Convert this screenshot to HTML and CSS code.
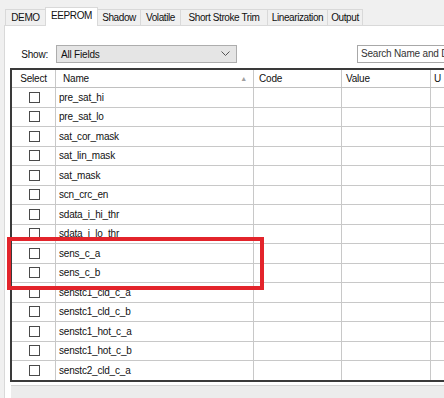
FILE: index.html
```html
<!DOCTYPE html>
<html lang="en">
<head>
    <meta charset="UTF-8">
    <title>EEPROM</title>
    <link rel="stylesheet" href="styles.css">
</head>
<body>
    <div class="tabs">
        <div class="tab tab-demo">DEMO</div>
        <div class="tab tab-eeprom active">EEPROM</div>
        <div class="tab tab-shadow">Shadow</div>
        <div class="tab tab-volatile">Volatile</div>
        <div class="tab tab-sst">Short Stroke Trim</div>
        <div class="tab tab-lin">Linearization</div>
        <div class="tab tab-out">Output</div>
    </div>

    <div class="panel">
        <div class="toolbar">
            <span class="show-label">Show:</span>
            <div class="combo">
                <span>All Fields</span>
                <svg class="chevron" width="9" height="6" viewBox="0 0 9 6"><path d="M0.5 0.5 L4.5 4.5 L8.5 0.5" fill="none" stroke="#555" stroke-width="1"/></svg>
            </div>
            <div class="search">Search Name and D</div>
        </div>

        <div class="grid">
            <div class="row head">
                <div class="cell c-select">Select</div>
                <div class="cell c-name">Name <span class="sort">&#9650;</span></div>
                <div class="cell c-code">Code</div>
                <div class="cell c-value">Value</div>
                <div class="cell c-unit">U</div>
            </div>
            <div class="row"><div class="cell c-select"><span class="check"></span></div><div class="cell c-name">pre_sat_hi</div><div class="cell c-code"></div><div class="cell c-value"></div><div class="cell c-unit"></div></div>
            <div class="row"><div class="cell c-select"><span class="check"></span></div><div class="cell c-name">pre_sat_lo</div><div class="cell c-code"></div><div class="cell c-value"></div><div class="cell c-unit"></div></div>
            <div class="row"><div class="cell c-select"><span class="check"></span></div><div class="cell c-name">sat_cor_mask</div><div class="cell c-code"></div><div class="cell c-value"></div><div class="cell c-unit"></div></div>
            <div class="row"><div class="cell c-select"><span class="check"></span></div><div class="cell c-name">sat_lin_mask</div><div class="cell c-code"></div><div class="cell c-value"></div><div class="cell c-unit"></div></div>
            <div class="row"><div class="cell c-select"><span class="check"></span></div><div class="cell c-name">sat_mask</div><div class="cell c-code"></div><div class="cell c-value"></div><div class="cell c-unit"></div></div>
            <div class="row"><div class="cell c-select"><span class="check"></span></div><div class="cell c-name">scn_crc_en</div><div class="cell c-code"></div><div class="cell c-value"></div><div class="cell c-unit"></div></div>
            <div class="row"><div class="cell c-select"><span class="check"></span></div><div class="cell c-name">sdata_i_hi_thr</div><div class="cell c-code"></div><div class="cell c-value"></div><div class="cell c-unit"></div></div>
            <div class="row"><div class="cell c-select"><span class="check"></span></div><div class="cell c-name">sdata_i_lo_thr</div><div class="cell c-code"></div><div class="cell c-value"></div><div class="cell c-unit"></div></div>
            <div class="row"><div class="cell c-select"><span class="check"></span></div><div class="cell c-name">sens_c_a</div><div class="cell c-code"></div><div class="cell c-value"></div><div class="cell c-unit"></div></div>
            <div class="row"><div class="cell c-select"><span class="check"></span></div><div class="cell c-name">sens_c_b</div><div class="cell c-code"></div><div class="cell c-value"></div><div class="cell c-unit"></div></div>
            <div class="row"><div class="cell c-select"><span class="check"></span></div><div class="cell c-name">senstc1_cld_c_a</div><div class="cell c-code"></div><div class="cell c-value"></div><div class="cell c-unit"></div></div>
            <div class="row"><div class="cell c-select"><span class="check"></span></div><div class="cell c-name">senstc1_cld_c_b</div><div class="cell c-code"></div><div class="cell c-value"></div><div class="cell c-unit"></div></div>
            <div class="row"><div class="cell c-select"><span class="check"></span></div><div class="cell c-name">senstc1_hot_c_a</div><div class="cell c-code"></div><div class="cell c-value"></div><div class="cell c-unit"></div></div>
            <div class="row"><div class="cell c-select"><span class="check"></span></div><div class="cell c-name">senstc1_hot_c_b</div><div class="cell c-code"></div><div class="cell c-value"></div><div class="cell c-unit"></div></div>
            <div class="row"><div class="cell c-select"><span class="check"></span></div><div class="cell c-name">senstc2_cld_c_a</div><div class="cell c-code"></div><div class="cell c-value"></div><div class="cell c-unit"></div></div>
        </div>

        <div class="status"></div>
    </div>

    <!-- annotation drawn over the grid -->
    <div class="highlight"></div>
</body>
</html>
```

FILE: styles.css
```css
body {
    margin: 0;
    background-color: #f0f0f0;
    font-family: "Liberation Sans", Arial, sans-serif;
    font-size: 10px;
    letter-spacing: -0.2px;
    color: #111;
    overflow: hidden;
    width: 444px;
    height: 398px;
    position: relative;
}
.tabs {
    display: flex;
    padding: 9px 0 0 5px;
    height: 16px;
    align-items: flex-end;
}
.tab {
    height: 15px;
    line-height: 15px;
    text-align: center;
    background: #f0f0f0;
    border: 1px solid #d9d9d9;
    border-bottom: none;
    margin-right: -1px;
    flex-shrink: 0;
    white-space: nowrap;
    letter-spacing: -0.4px;
}
.tab.active {
    height: 18px;
    line-height: 16px;
    background: #fff;
    position: relative;
    z-index: 1;
    margin-bottom: -1px;
}
.tab-demo { width: 39px; }
.tab-eeprom { width: 51px; }
.tab-shadow { width: 42px; }
.tab-volatile { width: 39px; }
.tab-sst { width: 86px; }
.tab-lin { width: 59px; }
.tab-out { width: 34px; }
.panel {
    margin-left: 4px;
    width: 470px;
    height: 380px;
    background: #fff;
    border: 1px solid #d9d9d9;
    box-sizing: border-box;
}
.toolbar {
    display: flex;
    align-items: center;
    margin-top: 19px;
    height: 18px;
}
.show-label {
    width: 43px;
    text-align: right;
    flex-shrink: 0;
}
.combo {
    margin-left: 8px;
    width: 181px;
    height: 18px;
    box-sizing: border-box;
    background: #e5e5e5;
    border: 1px solid #adadad;
    display: flex;
    align-items: center;
    justify-content: space-between;
    padding: 0 6px 0 4px;
    flex-shrink: 0;
}
.search {
    margin-left: 120px;
    width: 120px;
    height: 18px;
    box-sizing: border-box;
    border: 1px solid #a8a8a8;
    line-height: 16px;
    padding-left: 3px;
    white-space: nowrap;
    overflow: hidden;
    color: #333;
    flex-shrink: 0;
}
.grid {
    margin: 5px 0 0 5px;
    border: 2px solid #3a3a3a;
    border-right: none;
}
.row {
    display: flex;
    height: 18.5px;
    border-bottom: 1px solid #c8c8c8;
}
.row:last-child {
    border-bottom: none;
}
.row.head {
    height: 17px;
    border-bottom: 1px solid #c0c0c0;
}
.cell {
    border-right: 1px solid #c8c8c8;
    display: flex;
    align-items: center;
    box-sizing: border-box;
    white-space: nowrap;
    overflow: hidden;
    flex-shrink: 0;
}
.c-select { width: 44px; justify-content: center; }
.c-name { width: 198px; padding-left: 3px; }
.c-code { width: 88px; padding-left: 5px; }
.c-value { width: 89px; padding-left: 4px; }
.c-unit { width: 60px; padding-left: 3px; }
.head .c-name {
    padding-left: 7px;
    justify-content: space-between;
    padding-right: 6px;
}
.sort {
    font-size: 7px;
    color: #a0a0a0;
}
.check {
    width: 11px;
    height: 11px;
    box-sizing: border-box;
    border: 1px solid #4a4a4a;
    background: #fff;
    margin-left: 1px;
}
.status {
    margin: 3px 0 0 6px;
    height: 20px;
    background: #ececec;
    border-top: 1px solid #d4d4d4;
}
.highlight {
    position: absolute;
    left: 7px;
    top: 237px;
    width: 257px;
    height: 53px;
    border: 4px solid #e3242b;
    box-sizing: border-box;
}
```
